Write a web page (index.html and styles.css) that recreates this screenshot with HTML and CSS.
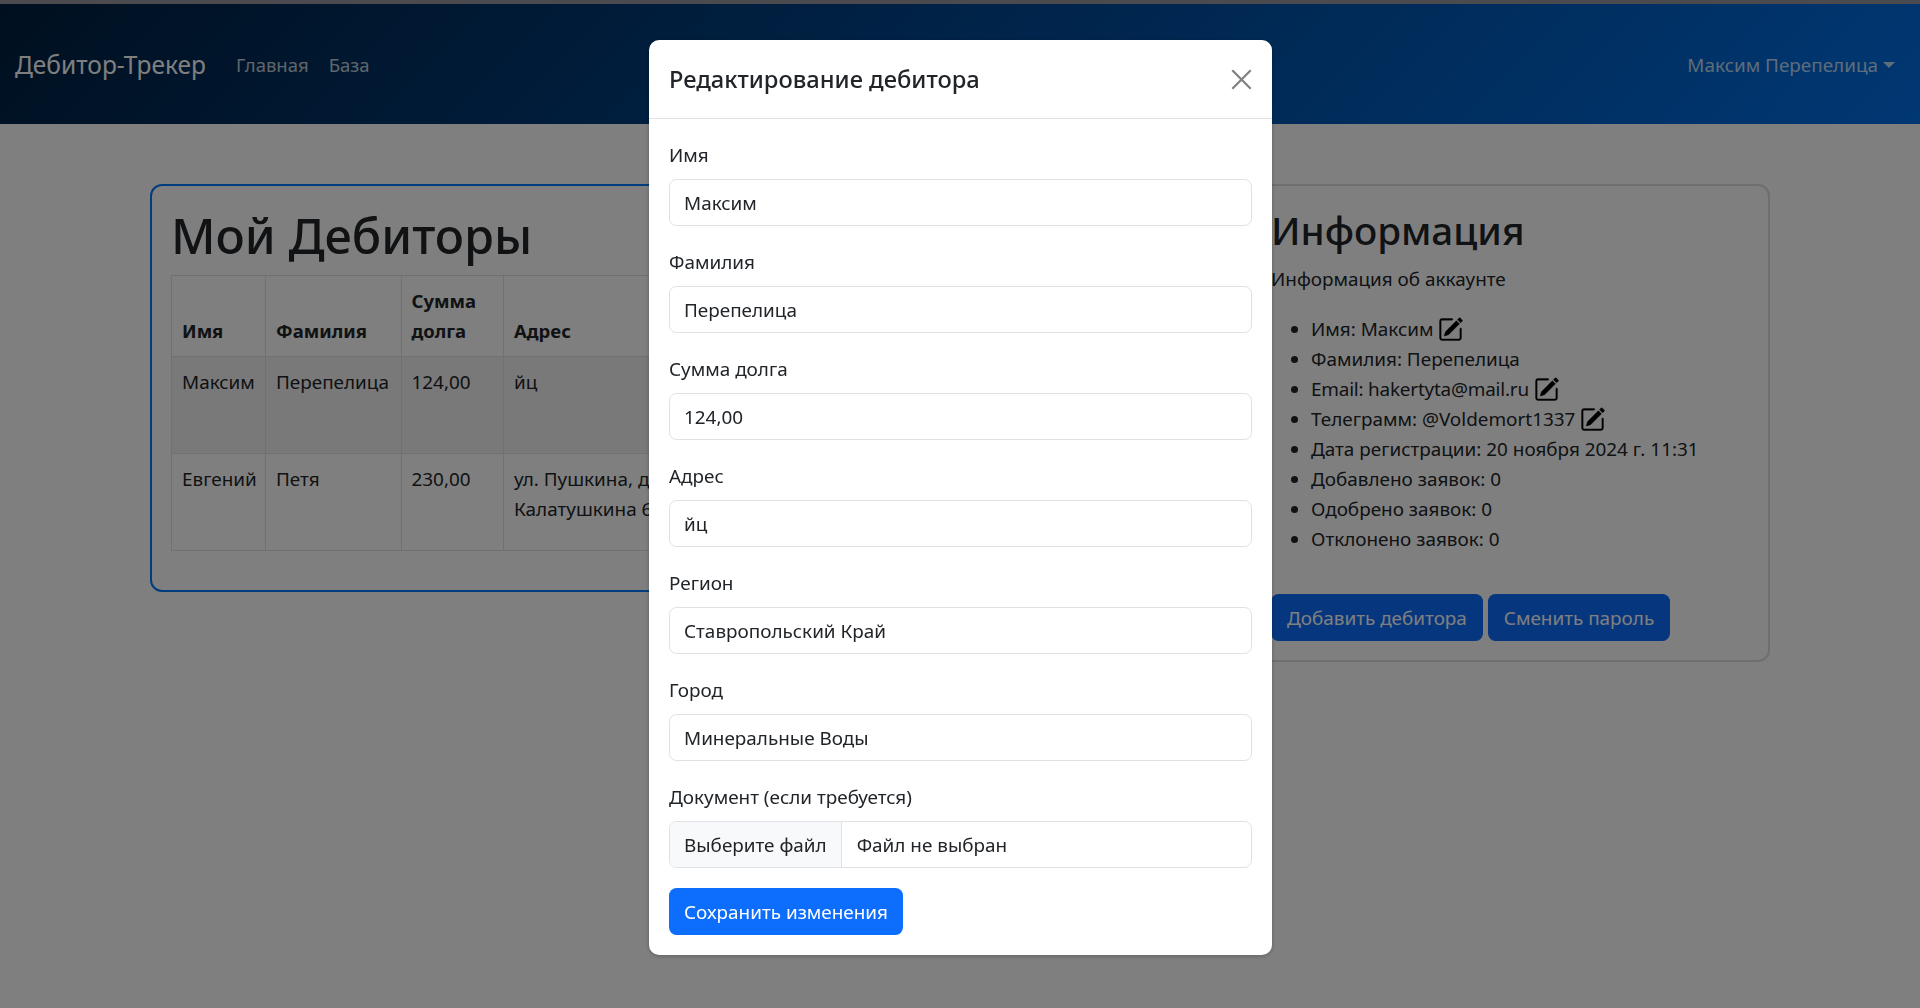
FILE: index.html
```html
<!DOCTYPE html>
<html lang="ru">
<head>
<meta charset="UTF-8" />
<meta name="viewport" content="width=device-width, initial-scale=1.0" />
<title>Дебитор-Трекер</title>
<link rel="stylesheet" href="styles.css">
</head>
<body>
  <div class="top-strip"></div>
  <nav class="navbar">
    <a class="brand" href="#">Дебитор-Трекер</a>
    <a class="nav-link" href="#">Главная</a>
    <a class="nav-link" href="#">База</a>
    <a class="nav-link user" href="#">Максим Перепелица<span class="caret"></span></a>
  </nav>

  <main class="container">
    <section class="card debtors">
      <h1>Мой Дебиторы</h1>
      <table>
        <thead>
          <tr>
            <th class="col-name">Имя</th>
            <th class="col-surname">Фамилия</th>
            <th class="col-sum">Сумма долга</th>
            <th>Адрес</th>
          </tr>
        </thead>
        <tbody>
          <tr class="hovered">
            <td>Максим</td>
            <td>Перепелица</td>
            <td>124,00</td>
            <td>йц</td>
          </tr>
          <tr>
            <td>Евгений</td>
            <td>Петя</td>
            <td>230,00</td>
            <td>ул. Пушкина, дом<br>Калатушкина 6</td>
          </tr>
        </tbody>
      </table>
    </section>

    <section class="card info">
      <h2>Информация</h2>
      <p>Информация об аккаунте</p>
      <ul>
        <li>Имя: Максим <svg class="edit" viewBox="0 0 16 16"><use href="#pencil-square"/></svg></li>
        <li>Фамилия: Перепелица</li>
        <li><span class="latin">Email: hakertyta@mail.ru</span> <svg class="edit" viewBox="0 0 16 16"><use href="#pencil-square"/></svg></li>
        <li>Телеграмм: @Voldemort1337 <svg class="edit" viewBox="0 0 16 16"><use href="#pencil-square"/></svg></li>
        <li>Дата регистрации: 20 ноября 2024 г. 11:31</li>
        <li>Добавлено заявок: 0</li>
        <li>Одобрено заявок: 0</li>
        <li>Отклонено заявок: 0</li>
      </ul>
      <div class="actions">
        <button class="btn btn-primary">Добавить дебитора</button>
        <button class="btn btn-primary">Сменить пароль</button>
      </div>
    </section>
  </main>

  <div class="backdrop"></div>

  <div class="modal">
    <div class="modal-header">
      <h5>Редактирование дебитора</h5>
      <svg class="close" viewBox="0 0 16 16"><path d="M1 1l14 14M15 1L1 15" /></svg>
    </div>
    <form class="modal-body">
      <label>Имя</label>
      <input type="text" value="Максим" />
      <label>Фамилия</label>
      <input type="text" value="Перепелица" />
      <label>Сумма долга</label>
      <input type="text" value="124,00" />
      <label>Адрес</label>
      <input type="text" value="йц" />
      <label>Регион</label>
      <input type="text" value="Ставропольский Край" />
      <label>Город</label>
      <input type="text" value="Минеральные Воды" />
      <label>Документ (если требуется)</label>
      <div class="file-input">
        <span class="file-btn">Выберите файл</span>
        <span class="file-name">Файл не выбран</span>
      </div>
      <button class="btn btn-primary" type="button">Сохранить изменения</button>
    </form>
  </div>

  <svg class="icon-defs">
    <symbol id="pencil-square" viewBox="0 0 16 16">
      <path d="M15.502 1.94a.5.5 0 0 1 0 .706L14.459 3.69l-2-2L13.502.646a.5.5 0 0 1 .707 0l1.293 1.293zm-1.75 2.456-2-2L4.939 9.21a.5.5 0 0 0-.121.196l-.805 2.414a.25.25 0 0 0 .316.316l2.414-.805a.5.5 0 0 0 .196-.12l6.813-6.814z"/>
      <path fill-rule="evenodd" d="M1 13.5A1.5 1.5 0 0 0 2.5 15h11a1.5 1.5 0 0 0 1.5-1.5v-6a.5.5 0 0 0-1 0v6a.5.5 0 0 1-.5.5h-11a.5.5 0 0 1-.5-.5v-11a.5.5 0 0 1 .5-.5H9a.5.5 0 0 0 0-1H2.5A1.5 1.5 0 0 0 1 2.5v11z"/>
    </symbol>
  </svg>
</body>
</html>
```

FILE: styles.css
```css
* {
  box-sizing: border-box;
}
body {
  margin: 0;
  height: 1008px;
  overflow: hidden;
  background-color: #fff;
  color: #212529;
  font-family: "Noto Sans", sans-serif;
  font-size: 18.9px;
  line-height: 30px;
}
a {
  text-decoration: none;
}
h1, h2 {
  margin: 0;
  font-weight: 500;
  line-height: 60px;
}
h1 {
  font-size: 48.6px;
}
h2 {
  font-size: 38.6px;
}

.top-strip {
  height: 4px;
  background-color: #94949f;
}

.navbar {
  display: flex;
  align-items: center;
  height: 120px;
  padding: 2px 15px 0;
  background: linear-gradient(135deg, #001f3f, #0070e8);
}
.brand {
  margin-right: 20px;
  color: #fff;
  font-size: 24.5px;
}
.nav-link {
  padding: 0 10px;
  color: rgba(255, 255, 255, 0.75);
  font-size: 18.5px;
}
.user {
  margin-left: auto;
  padding-right: 10px;
  font-size: 18.9px;
}
.caret {
  display: inline-block;
  margin-left: 5px;
  vertical-align: 4px;
  border-top: 6px solid;
  border-left: 6px solid transparent;
  border-right: 6px solid transparent;
}

.container {
  display: grid;
  grid-template-columns: 1070px 520px;
  gap: 30px;
  align-items: start;
  width: 1620px;
  margin: 60px auto 0;
}
.card {
  padding: 0 19px;
  border: 2.5px solid #dcdcdc;
  border-radius: 12px;
}
.debtors {
  height: 408px;
  padding-top: 19px;
  border-color: #007bff;
}
.info {
  height: 478px;
  padding-top: 14px;
}

table {
  width: 100%;
  table-layout: fixed;
  border-collapse: collapse;
  margin-top: 10px;
}
th, td {
  padding: 10px;
  border: 1px solid #dee2e6;
  text-align: left;
  vertical-align: top;
}
th {
  vertical-align: bottom;
  font-size: 18.5px;
  font-weight: 700;
}
tbody tr {
  height: 97px;
}
.hovered {
  background-color: rgba(0, 0, 0, 0.05);
}
.col-name {
  width: 94px;
}
.col-surname {
  width: 135.5px;
}
.col-sum {
  width: 102.5px;
}

.info p {
  margin: 4px 0 20px;
}
.info ul {
  margin: 0 0 20px;
  padding-left: 40px;
}
.latin {
  letter-spacing: -0.2px;
}
.edit {
  width: 25px;
  height: 25px;
  margin-bottom: -6px;
  fill: #000;
  stroke: #000;
  stroke-width: 0.25;
}
.actions {
  display: flex;
  gap: 5px;
  margin-top: 40px;
}

.btn {
  height: 47px;
  padding: 0 15px;
  border: 1px solid transparent;
  border-radius: 7.5px;
  font: inherit;
}
.btn-primary {
  background-color: #0d6efd;
  color: #fff;
}

.backdrop {
  position: fixed;
  inset: 0;
  background-color: rgba(0, 0, 0, 0.5);
}
.modal {
  position: fixed;
  top: 40px;
  left: 649px;
  width: 623px;
  height: 915px;
  background-color: #fff;
  border-radius: 10px;
  box-shadow: 0 1px 4px rgba(0, 0, 0, 0.25);
}
.modal-header {
  display: flex;
  align-items: center;
  justify-content: space-between;
  height: 79px;
  padding: 0 20px;
  border-bottom: 1px solid #dee2e6;
}
.modal-header h5 {
  margin: 0;
  font-size: 23.7px;
  font-weight: 500;
}
.close {
  width: 21px;
  height: 21px;
  fill: none;
  stroke: #808080;
  stroke-width: 1.7;
}
.modal-body {
  display: flex;
  flex-direction: column;
  align-items: flex-start;
  padding: 20px;
}
.modal-body .btn {
  padding: 0 14px;
}
label {
  padding-top: 1px;
  margin-bottom: 9px;
}
input[type="text"], .file-input {
  width: 100%;
  height: 47px;
  margin-bottom: 20px;
  border: 1px solid #dee2e6;
  border-radius: 7.5px;
  background-color: #fff;
  color: #212529;
  font: inherit;
}
input[type="text"] {
  padding: 0 14px;
}
.file-input {
  display: flex;
  align-items: center;
  overflow: hidden;
}
.file-btn {
  display: flex;
  align-items: center;
  height: 100%;
  padding: 0 14px;
  background-color: #f8f9fa;
  border-right: 1px solid #dee2e6;
}
.file-name {
  padding-left: 15px;
}

.icon-defs {
  display: none;
}
```
